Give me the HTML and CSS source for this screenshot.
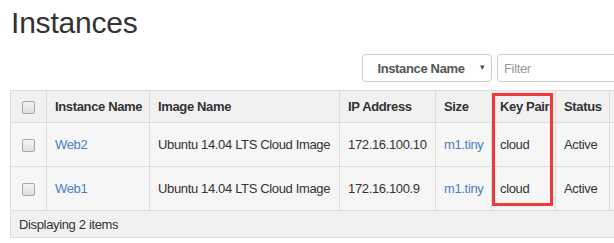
FILE: index.html
```html
<!DOCTYPE html>
<html lang="en">
<head>
    <meta charset="UTF-8">
    <title>Instances</title>
    <link rel="stylesheet" href="styles.css">
</head>
<body>
    <h1 class="page-title">Instances</h1>

    <div class="toolbar">
        <div class="filter-select">
            <span>Instance Name</span>
            <span class="caret">&#9662;</span>
        </div>
        <input class="filter-input" type="text" placeholder="Filter">
    </div>

    <div class="table-wrap">
        <table class="instances">
            <thead>
                <tr>
                    <th class="col-check"><span class="checkbox"></span></th>
                    <th class="col-name">Instance Name</th>
                    <th class="col-image">Image Name</th>
                    <th class="col-ip">IP Address</th>
                    <th class="col-size">Size</th>
                    <th class="col-key">Key Pair</th>
                    <th class="col-status">Status</th>
                    <th class="col-rest"></th>
                </tr>
            </thead>
            <tbody>
                <tr>
                    <td class="col-check"><span class="checkbox"></span></td>
                    <td><a href="#">Web2</a></td>
                    <td>Ubuntu 14.04 LTS Cloud Image</td>
                    <td>172.16.100.10</td>
                    <td><a href="#">m1.tiny</a></td>
                    <td>cloud</td>
                    <td>Active</td>
                    <td></td>
                </tr>
                <tr>
                    <td class="col-check"><span class="checkbox"></span></td>
                    <td><a href="#">Web1</a></td>
                    <td>Ubuntu 14.04 LTS Cloud Image</td>
                    <td>172.16.100.9</td>
                    <td><a href="#">m1.tiny</a></td>
                    <td>cloud</td>
                    <td>Active</td>
                    <td></td>
                </tr>
            </tbody>
            <tfoot>
                <tr>
                    <td colspan="8">Displaying 2 items</td>
                </tr>
            </tfoot>
        </table>
        <div class="highlight"></div>
    </div>
</body>
</html>
```

FILE: styles.css
```css
html, body {
    overflow: hidden;
}
body {
    margin: 0;
    padding: 0 0 0 10px;
    background-color: #ffffff;
    font-family: "Liberation Sans", Arial, sans-serif;
    font-size: 13px;
    letter-spacing: -0.35px;
    color: #333;
    width: 740px;
}
.page-title {
    margin: 0;
    padding: 6px 0 0 1px;
    font-size: 30px;
    font-weight: normal;
    line-height: 33px;
    letter-spacing: -0.2px;
    color: #333;
}
.toolbar {
    display: flex;
    gap: 5px;
    padding: 15px 0 0 352px;
    height: 28px;
}
.filter-select {
    box-sizing: border-box;
    width: 130px;
    height: 28px;
    border: 1px solid #ccc;
    border-radius: 4px;
    display: flex;
    align-items: center;
    justify-content: center;
    position: relative;
    font-weight: bold;
    color: #555;
    padding-right: 12px;
}
.filter-select .caret {
    position: absolute;
    right: 6px;
    top: 7px;
    font-size: 9px;
    color: #555;
    font-weight: normal;
}
.filter-input {
    box-sizing: border-box;
    width: 200px;
    height: 28px;
    border: 1px solid #ccc;
    border-radius: 4px;
    padding: 0 6px;
    font-family: inherit;
    font-size: 13px;
    letter-spacing: -0.35px;
}
.filter-input::placeholder {
    color: #999;
}
.table-wrap {
    position: relative;
    margin-top: 8px;
}
.instances {
    border-collapse: collapse;
    table-layout: fixed;
    width: 720px;
    border: 1px solid #ddd;
}
.instances th,
.instances td {
    border: 1px solid #ddd;
    padding: 0 8px;
    text-align: left;
    white-space: nowrap;
}
.instances thead th {
    background-color: #f1f1f1;
    height: 31px;
    font-weight: bold;
}
.instances tbody td {
    background-color: #f6f6f6;
    height: 43px;
}
.instances tfoot td {
    background-color: #f1f1f1;
    height: 26px;
}
.col-check { width: 19px; text-align: center !important; }
.col-name { width: 86px; }
.col-image { width: 173px; }
.col-ip { width: 79px; }
.col-size { width: 39px; }
.col-key { width: 47px; }
.col-status { width: 37px; }
.checkbox {
    display: inline-block;
    width: 11px;
    height: 11px;
    border: 1px solid #a8a8a8;
    border-radius: 2px;
    background: linear-gradient(#f4f4f4, #dedede);
    vertical-align: middle;
}
a {
    color: #4a80c2;
    text-decoration: none;
}
.highlight {
    position: absolute;
    left: 482px;
    top: 3px;
    width: 55px;
    height: 107px;
    border: 3px solid #f03a3a;
}
```
